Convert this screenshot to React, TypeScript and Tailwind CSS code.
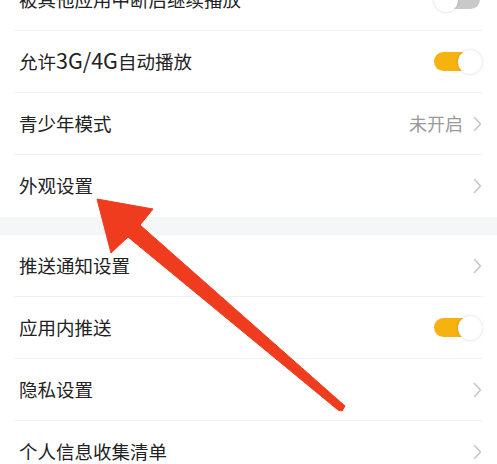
import React from "react";

type Row =
  | { label: React.ReactNode; key: string; kind: "toggle"; on: boolean }
  | { label: React.ReactNode; key: string; kind: "link"; value?: string };

const groupA: Row[] = [
  { key: "a0", label: "被其他应用中断后继续播放", kind: "toggle", on: false },
  {
    key: "a1",
    label: (
      <>
        允许<span className="text-[21.5px] leading-none">3G/4G</span>自动播放
      </>
    ),
    kind: "toggle",
    on: true,
  },
  { key: "a2", label: "青少年模式", kind: "link", value: "未开启" },
  { key: "a3", label: "外观设置", kind: "link" },
];

const groupB: Row[] = [
  { key: "b0", label: "推送通知设置", kind: "link" },
  { key: "b1", label: "应用内推送", kind: "toggle", on: true },
  { key: "b2", label: "隐私设置", kind: "link" },
  { key: "b3", label: "个人信息收集清单", kind: "link" },
];

function Toggle({ on }: { on: boolean }) {
  return (
    <div className="relative h-[24px] w-[48px] flex items-center">
      <div className={`h-[19px] w-[46px] rounded-full ${on ? "bg-[#f6b20f]" : "bg-[#c9c9c9]"}`} />
      <div
        className={`absolute top-0 h-[24px] w-[24px] rounded-full bg-white shadow-[0_0_3px_rgba(0,0,0,0.18)] ${on ? "right-0" : "left-0"}`}
      />
    </div>
  );
}

function Chevron() {
  return (
    <svg width="9" height="16" viewBox="0 0 9 16" fill="none">
      <path d="M1.5 1.5 L7.5 8 L1.5 14.5" stroke="#c6c6c6" strokeWidth="1.5" strokeLinecap="round" strokeLinejoin="round" />
    </svg>
  );
}

function SettingRow({ row, last }: { row: Row; last: boolean }) {
  return (
    <div>
      <div className={`flex items-center justify-between pl-[19px] pr-[15px] ${last ? "h-[62px]" : "h-[61px]"}`}>
        <span className="text-[18.5px] text-[#222]">{row.label}</span>
        {row.kind === "toggle" ? (
          <Toggle on={row.on} />
        ) : (
          <div className="flex items-center gap-[10px]">
            {row.value ? <span className="text-[18px] text-[#9a9a9a]">{row.value}</span> : null}
            <Chevron />
          </div>
        )}
      </div>
      {!last ? <div className="mx-[14px] h-px bg-[#f1f1f1]" /> : null}
    </div>
  );
}

export default function App() {
  return (
    <div
      className="relative h-[464px] w-[497px] overflow-hidden bg-white"
      style={{ fontFamily: '"Noto Sans CJK SC", "Noto Sans", sans-serif' }}
    >
      <div className="mt-[-31px]">
        {groupA.map((r, i) => (
          <SettingRow key={r.key} row={r} last={i === groupA.length - 1} />
        ))}
        <div className="h-[18px] bg-[#f5f6f7]" />
        {groupB.map((r, i) => (
          <SettingRow key={r.key} row={r} last={i === groupB.length - 1} />
        ))}
      </div>

      {/* red annotation arrow */}
      <svg className="pointer-events-none absolute inset-0" width="497" height="464" viewBox="0 0 497 464">
        <polygon
          points="97,199 153,209 140,225 345,406 342,411 338,410 128,237 111,253"
          fill="#ef3b1e"
          stroke="#ef3b1e"
          strokeWidth="1"
          strokeLinejoin="round"
        />
      </svg>
    </div>
  );
}
